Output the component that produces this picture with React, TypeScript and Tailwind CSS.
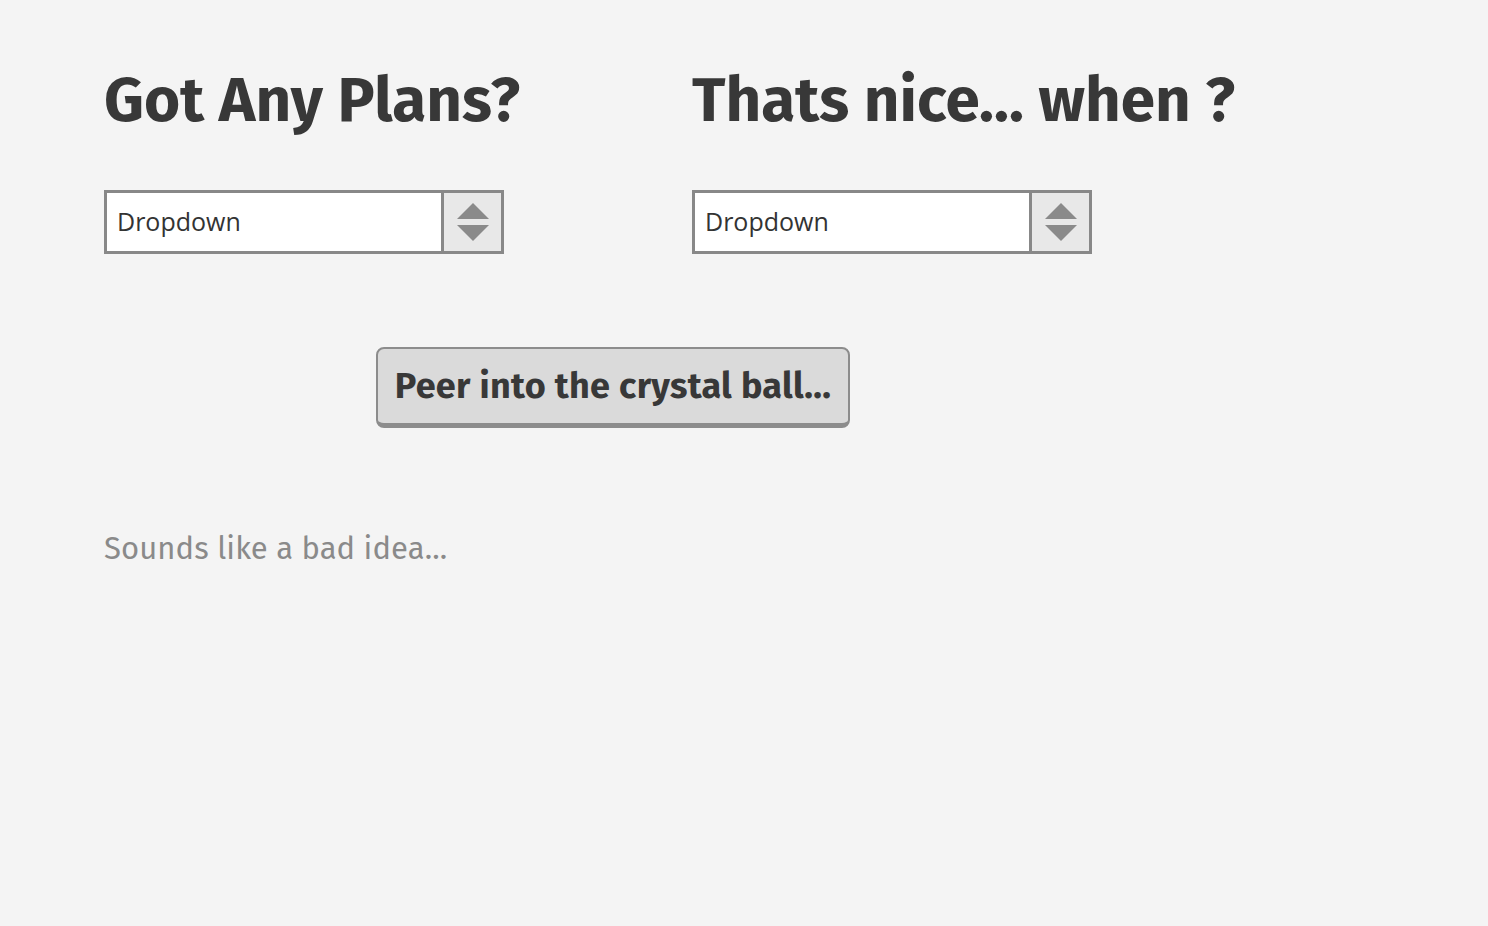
import React from "react";

function Dropdown() {
  return (
    <div className="flex h-[64px] w-[400px] border-[3px] border-[#888888] bg-white">
      <div className="flex flex-1 items-center pl-[10px] text-[25px] text-[#333333]" style={{ fontFamily: '"Open Sans", sans-serif' }}>
        Dropdown
      </div>
      <div className="flex w-[60px] items-center justify-center border-l-[3px] border-[#888888] bg-[#e8e8e8]">
        <svg width="34" height="42" viewBox="0 0 34 42">
          <polygon points="17,2 33,18 1,18" fill="#8a8a8a" />
          <polygon points="17,40 33,24 1,24" fill="#8a8a8a" />
        </svg>
      </div>
    </div>
  );
}

export default function App() {
  const font = { fontFamily: '"Fira Sans", "Noto Sans", "Open Sans", sans-serif' };
  return (
    <div className="min-h-[926px] w-full bg-[#f4f4f4]" style={font}>
      <div className="pl-[104px] pt-[62px]">
        <div className="grid grid-cols-[588px_1fr]">
          <h1 className="text-[62px] font-bold leading-[76px] text-[#383838]">Got Any Plans?</h1>
          <h1 className="text-[62px] font-bold leading-[76px] text-[#383838]">Thats nice... when ?</h1>
        </div>
        <div className="mt-[52px] grid grid-cols-[588px_1fr]">
          <Dropdown />
          <Dropdown />
        </div>
        <div className="mt-[93px] pl-[272px]">
          <button className="h-[81px] w-[474px] rounded-[8px] border-2 border-b-[5px] border-[#8c8c8c] bg-[#dadada] text-[36px] font-bold tracking-[0.3px] text-[#383838]">
            Peer into the crystal ball...
          </button>
        </div>
        <div className="mt-[98px] text-[31px] tracking-[0.1px] text-[#8a8a8a]">Sounds like a bad idea...</div>
      </div>
    </div>
  );
}
